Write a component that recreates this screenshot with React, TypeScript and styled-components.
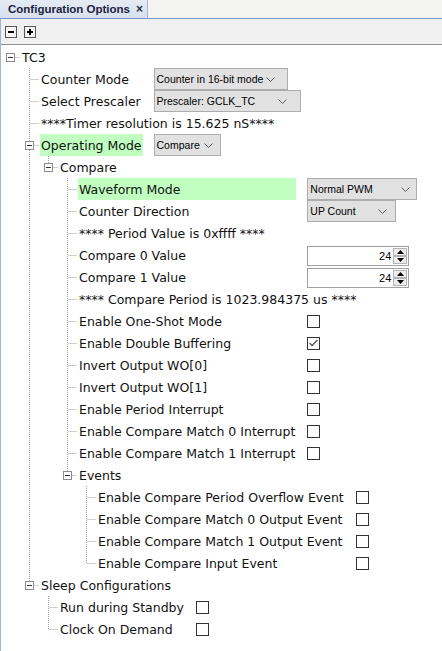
import React from 'react';
import styled, { createGlobalStyle } from 'styled-components';

const GlobalStyle = createGlobalStyle`
  html, body {
    margin: 0;
    padding: 0;
    background: #ffffff;
  }
  body {
    font-family: 'DejaVu Sans', Verdana, sans-serif;
    color: #000;
  }
`;

type Control =
  | { kind: 'select'; value: string; width: number; arrow: number }
  | { kind: 'spin'; value: number }
  | { kind: 'check'; checked?: boolean };

type TreeNode = {
  label: string;
  control?: Control;
  highlight?: boolean;
  children?: TreeNode[];
};

const ROW = 22;
const INDENT = 19;

const Window = styled.div`
  display: flex;
  flex-direction: column;
  height: 100vh;
  background: #fff;
`;

const TabStrip = styled.div`
  display: flex;
  height: 18px;
  background: #f3f3f0;
  border-bottom: 1px solid #7397c9;
`;

const Tab = styled.div`
  display: flex;
  align-items: center;
  gap: 6px;
  width: 148px;
  box-sizing: border-box;
  padding-left: 8px;
  background: linear-gradient(#e4ebf4, #d8e1ec);
  border-right: 1px solid #a9b9cf;
  font: bold 11.5px 'Liberation Sans', Arial, sans-serif;
  color: #1c2340;
  white-space: nowrap;
`;

const Close = styled.span`
  font: bold 12px 'Liberation Sans', Arial, sans-serif;
  color: #2a2f45;
`;

const Body = styled.div`
  flex: 1;
  display: flex;
  flex-direction: column;
  border-left: 1px solid #a3b5cc;
`;

const Toolbar = styled.div`
  display: flex;
  align-items: center;
  gap: 7px;
  height: 25px;
  padding-left: 4px;
  background: #f0f0f0;
  border-bottom: 1px solid #8f8f8f;
`;

const ToolButton = styled.svg`
  display: block;
  width: 12px;
  height: 12px;
`;

const Tree = styled.div`
  flex: 1;
  padding-top: 1px;
  background: #fff;
`;

const GroupGrid = styled.div`
  display: grid;
  grid-template-columns: max-content 1fr;
  column-gap: 11px;
`;

const Nested = styled.div`
  grid-column: 1 / -1;
`;

const RowHead = styled.div<{ $span: boolean }>`
  display: flex;
  height: ${ROW}px;
  grid-column: ${(p) => (p.$span ? '1 / -1' : 'auto')};
`;

const GutterSvg = styled.svg`
  flex: none;
  display: block;
`;

const Label = styled.span<{ $hl?: boolean }>`
  flex: 1;
  margin-left: 1px;
  padding: 1px 1px 0;
  height: ${ROW - 1}px;
  line-height: ${ROW - 1}px;
  font-size: 12.5px;
  color: #111;
  white-space: nowrap;
  background: ${(p) => (p.$hl ? '#c0ffc0' : 'transparent')};
`;

const Cell = styled.div`
  display: flex;
  align-items: center;
  height: ${ROW}px;
`;

const SelectBox = styled.div<{ $w: number }>`
  display: flex;
  align-items: center;
  width: ${(p) => p.$w}px;
  height: ${ROW}px;
  box-sizing: border-box;
  padding-left: 2px;
  border: 1px solid #adadad;
  background: #e1e1e1;
  font: 10.5px 'Liberation Sans', Arial, sans-serif;
  white-space: nowrap;
`;

const Chevron = styled.svg<{ $gap: number }>`
  display: block;
  margin-left: auto;
  margin-right: ${(p) => p.$gap}px;
`;

const SpinBox = styled.div`
  display: flex;
  width: 102px;
  height: 20px;
  margin-top: 1px;
  box-sizing: border-box;
  border: 1px solid #a0a0a0;
  background: #fff;
`;

const SpinValue = styled.span`
  flex: 1;
  text-align: right;
  padding-right: 2px;
  font: 11px/18px 'Liberation Sans', Arial, sans-serif;
`;

const SpinButtons = styled.div`
  display: flex;
  flex-direction: column;
  width: 14px;
  margin: 1px 1px 1px 0;
`;

const SpinButton = styled.div`
  flex: 1;
  display: flex;
  align-items: center;
  justify-content: center;
  box-sizing: border-box;
  border: 1px solid #b4b4b4;
  background: #ececec;
`;

const CheckBox = styled.span`
  display: flex;
  align-items: center;
  justify-content: center;
  width: 13px;
  height: 13px;
  box-sizing: border-box;
  border: 1px solid #333;
  background: #fff;
`;

const tree: TreeNode = {
  label: 'TC3',
  children: [
    { label: 'Counter Mode', control: { kind: 'select', value: 'Counter in 16-bit mode', width: 134, arrow: 12 } },
    { label: 'Select Prescaler', control: { kind: 'select', value: 'Prescaler: GCLK_TC', width: 147, arrow: 13 } },
    { label: '****Timer resolution is 15.625 nS****' },
    {
      label: 'Operating Mode',
      highlight: true,
      control: { kind: 'select', value: 'Compare', width: 67, arrow: 7 },
      children: [
        {
          label: 'Compare',
          children: [
            { label: 'Waveform Mode', highlight: true, control: { kind: 'select', value: 'Normal PWM', width: 110, arrow: 6 } },
            { label: 'Counter Direction', control: { kind: 'select', value: 'UP Count', width: 89, arrow: 8 } },
            { label: '**** Period Value is 0xffff ****' },
            { label: 'Compare 0 Value', control: { kind: 'spin', value: 24 } },
            { label: 'Compare 1 Value', control: { kind: 'spin', value: 24 } },
            { label: '**** Compare Period is 1023.984375 us ****' },
            { label: 'Enable One-Shot Mode', control: { kind: 'check' } },
            { label: 'Enable Double Buffering', control: { kind: 'check', checked: true } },
            { label: 'Invert Output WO[0]', control: { kind: 'check' } },
            { label: 'Invert Output WO[1]', control: { kind: 'check' } },
            { label: 'Enable Period Interrupt', control: { kind: 'check' } },
            { label: 'Enable Compare Match 0 Interrupt', control: { kind: 'check' } },
            { label: 'Enable Compare Match 1 Interrupt', control: { kind: 'check' } },
            {
              label: 'Events',
              children: [
                { label: 'Enable Compare Period Overflow Event', control: { kind: 'check' } },
                { label: 'Enable Compare Match 0 Output Event', control: { kind: 'check' } },
                { label: 'Enable Compare Match 1 Output Event', control: { kind: 'check' } },
                { label: 'Enable Compare Input Event', control: { kind: 'check' } },
              ],
            },
          ],
        },
      ],
    },
    {
      label: 'Sleep Configurations',
      children: [
        { label: 'Run during Standby', control: { kind: 'check' } },
        { label: 'Clock On Demand', control: { kind: 'check' } },
      ],
    },
  ],
};

// dotted connectors + expander box for one row
function Gutter({ level, trail, last, branch }: { level: number; trail: boolean[]; last: boolean; branch: boolean }) {
  const w = INDENT * (level + 1);
  const c = (k: number) => INDENT * k + 9.5;
  const x = c(level);
  return (
    <GutterSvg width={w} height={ROW}>
      <g stroke="#a0a0a0" strokeWidth="1" strokeDasharray="1 1">
        {trail.map((on, k) => (k >= 1 && on ? <line key={k} x1={c(k)} y1={0} x2={c(k)} y2={ROW} /> : null))}
        {level > 0 && <line x1={x} y1={0} x2={x} y2={last ? 12 : ROW} />}
        <line x1={x + 1} y1={11.5} x2={w} y2={11.5} />
      </g>
      {branch && (
        <g>
          <rect x={x - 4} y={7.5} width={8} height={8} fill="#fff" stroke="#8c8c8c" />
          <line x1={x - 2.5} y1={11.5} x2={x + 2.5} y2={11.5} stroke="#333" />
        </g>
      )}
    </GutterSvg>
  );
}

function ControlView({ control }: { control: Control }) {
  if (control.kind === 'select') {
    return (
      <SelectBox $w={control.width}>
        {control.value}
        <Chevron $gap={control.arrow} width="9" height="5" viewBox="0 0 9 5">
          <polyline points="0.5,0.5 4.5,4.5 8.5,0.5" fill="none" stroke="#606060" />
        </Chevron>
      </SelectBox>
    );
  }
  if (control.kind === 'spin') {
    return (
      <SpinBox>
        <SpinValue>{control.value}</SpinValue>
        <SpinButtons>
          <SpinButton>
            <svg width="7" height="4" viewBox="0 0 7 4">
              <polygon points="0,4 3.5,0 7,4" fill="#000" />
            </svg>
          </SpinButton>
          <SpinButton>
            <svg width="7" height="4" viewBox="0 0 7 4">
              <polygon points="0,0 3.5,4 7,0" fill="#000" />
            </svg>
          </SpinButton>
        </SpinButtons>
      </SpinBox>
    );
  }
  return (
    <CheckBox>
      {control.checked && (
        <svg width="11" height="11" viewBox="0 0 11 11">
          <polyline points="1.5,5 4,7.5 9.5,2" fill="none" stroke="#555" strokeWidth="1.3" />
        </svg>
      )}
    </CheckBox>
  );
}

function Group({ nodes, level, trail }: { nodes: TreeNode[]; level: number; trail: boolean[] }) {
  return (
    <GroupGrid>
      {nodes.map((node, i) => {
        const last = i === nodes.length - 1;
        return (
          <React.Fragment key={node.label}>
            <RowHead $span={!node.control}>
              <Gutter level={level} trail={trail} last={last} branch={!!node.children} />
              <Label $hl={node.highlight}>{node.label}</Label>
            </RowHead>
            {node.control && (
              <Cell>
                <ControlView control={node.control} />
              </Cell>
            )}
            {node.children && (
              <Nested>
                <Group nodes={node.children} level={level + 1} trail={[...trail, !last]} />
              </Nested>
            )}
          </React.Fragment>
        );
      })}
    </GroupGrid>
  );
}

export default function App() {
  return (
    <Window>
      <GlobalStyle />
      <TabStrip>
        <Tab>
          Configuration Options
          <Close>×</Close>
        </Tab>
      </TabStrip>
      <Body>
        <Toolbar>
          <ToolButton viewBox="0 0 12 12">
            <rect x="0.5" y="0.5" width="11" height="11" fill="#f7f7f7" stroke="#555" />
            <rect x="3" y="5" width="6" height="2" fill="#000" />
          </ToolButton>
          <ToolButton viewBox="0 0 12 12">
            <rect x="0.5" y="0.5" width="11" height="11" fill="#f7f7f7" stroke="#555" />
            <rect x="3" y="5" width="6" height="2" fill="#000" />
            <rect x="5" y="3" width="2" height="6" fill="#000" />
          </ToolButton>
        </Toolbar>
        <Tree>
          <Group nodes={[tree]} level={0} trail={[]} />
        </Tree>
      </Body>
    </Window>
  );
}
